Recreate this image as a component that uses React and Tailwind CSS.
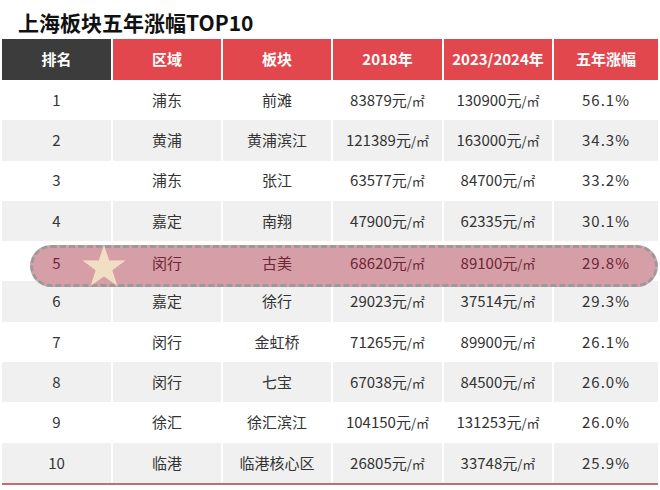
import React from 'react'

const rows = [
  ['1', '浦东', '前滩', '83879', '130900', '56.1%'],
  ['2', '黄浦', '黄浦滨江', '121389', '163000', '34.3%'],
  ['3', '浦东', '张江', '63577', '84700', '33.2%'],
  ['4', '嘉定', '南翔', '47900', '62335', '30.1%'],
  ['5', '闵行', '古美', '68620', '89100', '29.8%'],
  ['6', '嘉定', '徐行', '29023', '37514', '29.3%'],
  ['7', '闵行', '金虹桥', '71265', '89900', '26.1%'],
  ['8', '闵行', '七宝', '67038', '84500', '26.0%'],
  ['9', '徐汇', '徐汇滨江', '104150', '131253', '26.0%'],
  ['10', '临港', '临港核心区', '26805', '33748', '25.9%'],
]

const headers = ['排名', '区域', '板块', '2018年', '2023/2024年', '五年涨幅']

const Price = ({ v }) => (
  <span>
    {v}元<span className="text-[13px]">/㎡</span>
  </span>
)

const Star = () => (
  <svg width="44" height="42" viewBox="0 0 44 42" className="absolute left-[80px] top-[4px] z-20">
    <polygon
      points="22,0 27.2,15.4 43.4,15.6 30.4,25.3 35.2,40.8 22,31.4 8.8,40.8 13.6,25.3 0.6,15.6 16.8,15.4"
      fill="#f2dfc3"
    />
  </svg>
)

export default function App() {
  return (
    <div
      className="w-[660px] h-[490px] bg-white overflow-hidden"
      style={{ fontFamily: '"Noto Sans CJK SC", "Noto Sans", sans-serif' }}
    >
      <div className="h-[39px] pl-[18px] pt-[7px] text-[21px] leading-[30px] font-bold text-[#111]">
        上海板块五年涨幅TOP10
      </div>
      <div className="ml-[2px] w-[656px]">
        <div className="grid grid-cols-[109px_108px_108px_109px_108px_104px] gap-x-[2px] h-[41px]">
          {headers.map((h, i) => (
            <div
              key={h}
              className={`flex items-center justify-center text-white font-bold text-[15px] ${
                i === 0 ? 'bg-[#3c3c3c]' : 'bg-[#e2474d]'
              }`}
            >
              {h}
            </div>
          ))}
        </div>
        {rows.map((r, idx) => {
          const gray = idx % 2 === 1
          const hi = idx === 4
          return (
            <div
              key={r[0]}
              className={`relative grid grid-cols-[109px_108px_108px_109px_108px_104px] gap-x-[2px] h-[40.3px] ${
                hi ? 'z-30' : ''
              }`}
            >
              {hi && (
                <>
                  <div className="absolute left-[28px] right-[0px] top-[4px] h-[42px] rounded-full bg-[#d69ea7] border-[3px] border-dashed border-[#9a9a9a] z-0" />
                  <Star />
                </>
              )}
              {r.map((c, i) => (
                <div
                  key={i}
                  className={`relative z-10 flex items-center justify-center text-[15px] ${
                    hi ? 'text-[#6d2638] pt-[4px]' : 'text-[#333]'
                  } ${gray ? 'bg-[#f0f0f0]' : ''} ${i === 5 ? 'tracking-[1px]' : ''}`}
                >
                  {i === 3 || i === 4 ? <Price v={c} /> : c}
                </div>
              ))}
            </div>
          )
        })}
        <div className="h-[2px] bg-[#c46c6e]" />
      </div>
    </div>
  )
}
